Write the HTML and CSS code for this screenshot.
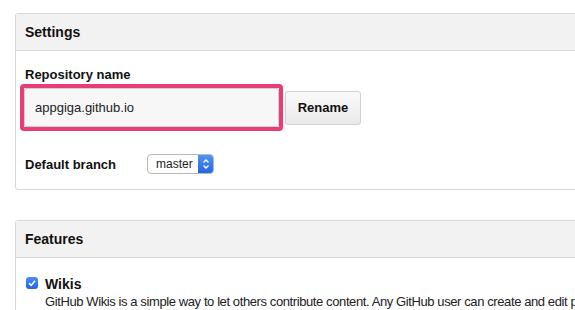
FILE: index.html
```html
<!DOCTYPE html>
<html lang="en">
<head>
    <meta charset="UTF-8">
    <title>Repository Settings</title>
    <link rel="stylesheet" href="styles.css">
</head>
<body>
    <div class="page">
        <div class="boxed-group">
            <h3 class="boxed-header">Settings</h3>
            <div class="boxed-body">
                <label class="field-label" for="repoName">Repository name</label>
                <div class="rename-row">
                    <div class="highlight">
                        <input class="text-input" id="repoName" type="text" value="appgiga.github.io">
                    </div>
                    <button class="btn">Rename</button>
                </div>
                <div class="branch-row">
                    <span class="branch-label">Default branch</span>
                    <div class="select">
                        <span class="select-value">master</span>
                        <span class="select-arrows">
                            <svg width="8" height="12" viewBox="0 0 8 12">
                                <path d="M1.5 4.5 L4 2 L6.5 4.5 M1.5 7.5 L4 10 L6.5 7.5" fill="none" stroke="#fff" stroke-width="1.4"/>
                            </svg>
                        </span>
                    </div>
                </div>
            </div>
        </div>

        <div class="boxed-group">
            <h3 class="boxed-header">Features</h3>
            <div class="boxed-body features-body">
                <div class="feature">
                    <span class="checkbox">
                        <svg width="12" height="12" viewBox="0 0 12 12">
                            <path d="M3 6.2 L5.2 8.4 L9 3.8" fill="none" stroke="#fff" stroke-width="1.6"/>
                        </svg>
                    </span>
                    <div class="feature-text">
                        <div class="feature-name">Wikis</div>
                        <p class="feature-desc">GitHub Wikis is a simple way to let others contribute content. Any GitHub user can create and edit pages to use for documentation, examples, support, or anything you wish.</p>
                    </div>
                </div>
            </div>
        </div>
    </div>
</body>
</html>
```

FILE: styles.css
```css
body {
    margin: 0;
    padding: 0;
    background-color: white;
    font-family: 'Liberation Sans', Arial, sans-serif;
    color: #222;
    overflow: hidden;
}

.page {
    padding: 13px 0 0 15px;
    width: 760px;
}

.boxed-group {
    border: 1px solid #d8d8d8;
    border-radius: 3px;
    margin-bottom: 30px;
}

.boxed-header {
    margin: 0;
    height: 36px;
    line-height: 36px;
    padding: 0 9px;
    background-color: #f2f2f2;
    border-bottom: 1px solid #d8d8d8;
    font-size: 14px;
    font-weight: bold;
    color: #111;
}

.boxed-body {
    padding: 16px 9px 15px;
}

.field-label {
    display: block;
    font-size: 13px;
    font-weight: bold;
    line-height: 16px;
    color: #111;
    margin-bottom: 1px;
}

.rename-row {
    display: flex;
    align-items: center;
}

.highlight {
    border: 4px solid #e83e75;
    border-radius: 4px;
    margin-left: -5px;
}

.text-input {
    display: block;
    box-sizing: border-box;
    width: 255px;
    height: 39px;
    border: 1px solid #cfcfcf;
    border-radius: 2px;
    background-color: #f7f7f7;
    padding: 0 10px;
    font-family: 'Liberation Sans', Arial, sans-serif;
    font-size: 13px;
    color: #222;
}

.btn {
    margin-left: 2px;
    width: 76px;
    height: 34px;
    border: 1px solid #d0d0d0;
    border-radius: 3px;
    background: linear-gradient(#fafafa, #eaeaea);
    font-family: 'Liberation Sans', Arial, sans-serif;
    font-size: 13px;
    font-weight: bold;
    color: #111;
}

.branch-row {
    display: flex;
    align-items: center;
    margin-top: 23px;
}

.branch-label {
    width: 122px;
    font-size: 13px;
    font-weight: bold;
    color: #111;
}

.select {
    display: flex;
    height: 20px;
    width: 67px;
    box-sizing: border-box;
    border: 1px solid #b8b8b8;
    border-radius: 4px;
    overflow: hidden;
    background-color: white;
}

.select-value {
    flex: 1;
    font-size: 12px;
    line-height: 18px;
    padding-left: 8px;
    color: #222;
}

.select-arrows {
    width: 15px;
    display: flex;
    align-items: center;
    justify-content: center;
    background: linear-gradient(#4f94f5, #2466e0);
}

.features-body {
    padding: 19px 9px 10px;
}

.feature {
    display: flex;
    align-items: flex-start;
}

.checkbox {
    width: 12px;
    height: 12px;
    margin: 0 7px 0 1px;
    border-radius: 3px;
    background: linear-gradient(#4b8ff3, #2265e0);
    display: flex;
}

.feature-name {
    font-size: 14px;
    font-weight: bold;
    line-height: 14px;
    color: #111;
}

.feature-desc {
    margin: 3px 0 0;
    font-size: 13px;
    letter-spacing: -0.4px;
    white-space: nowrap;
    color: #222;
}
```
